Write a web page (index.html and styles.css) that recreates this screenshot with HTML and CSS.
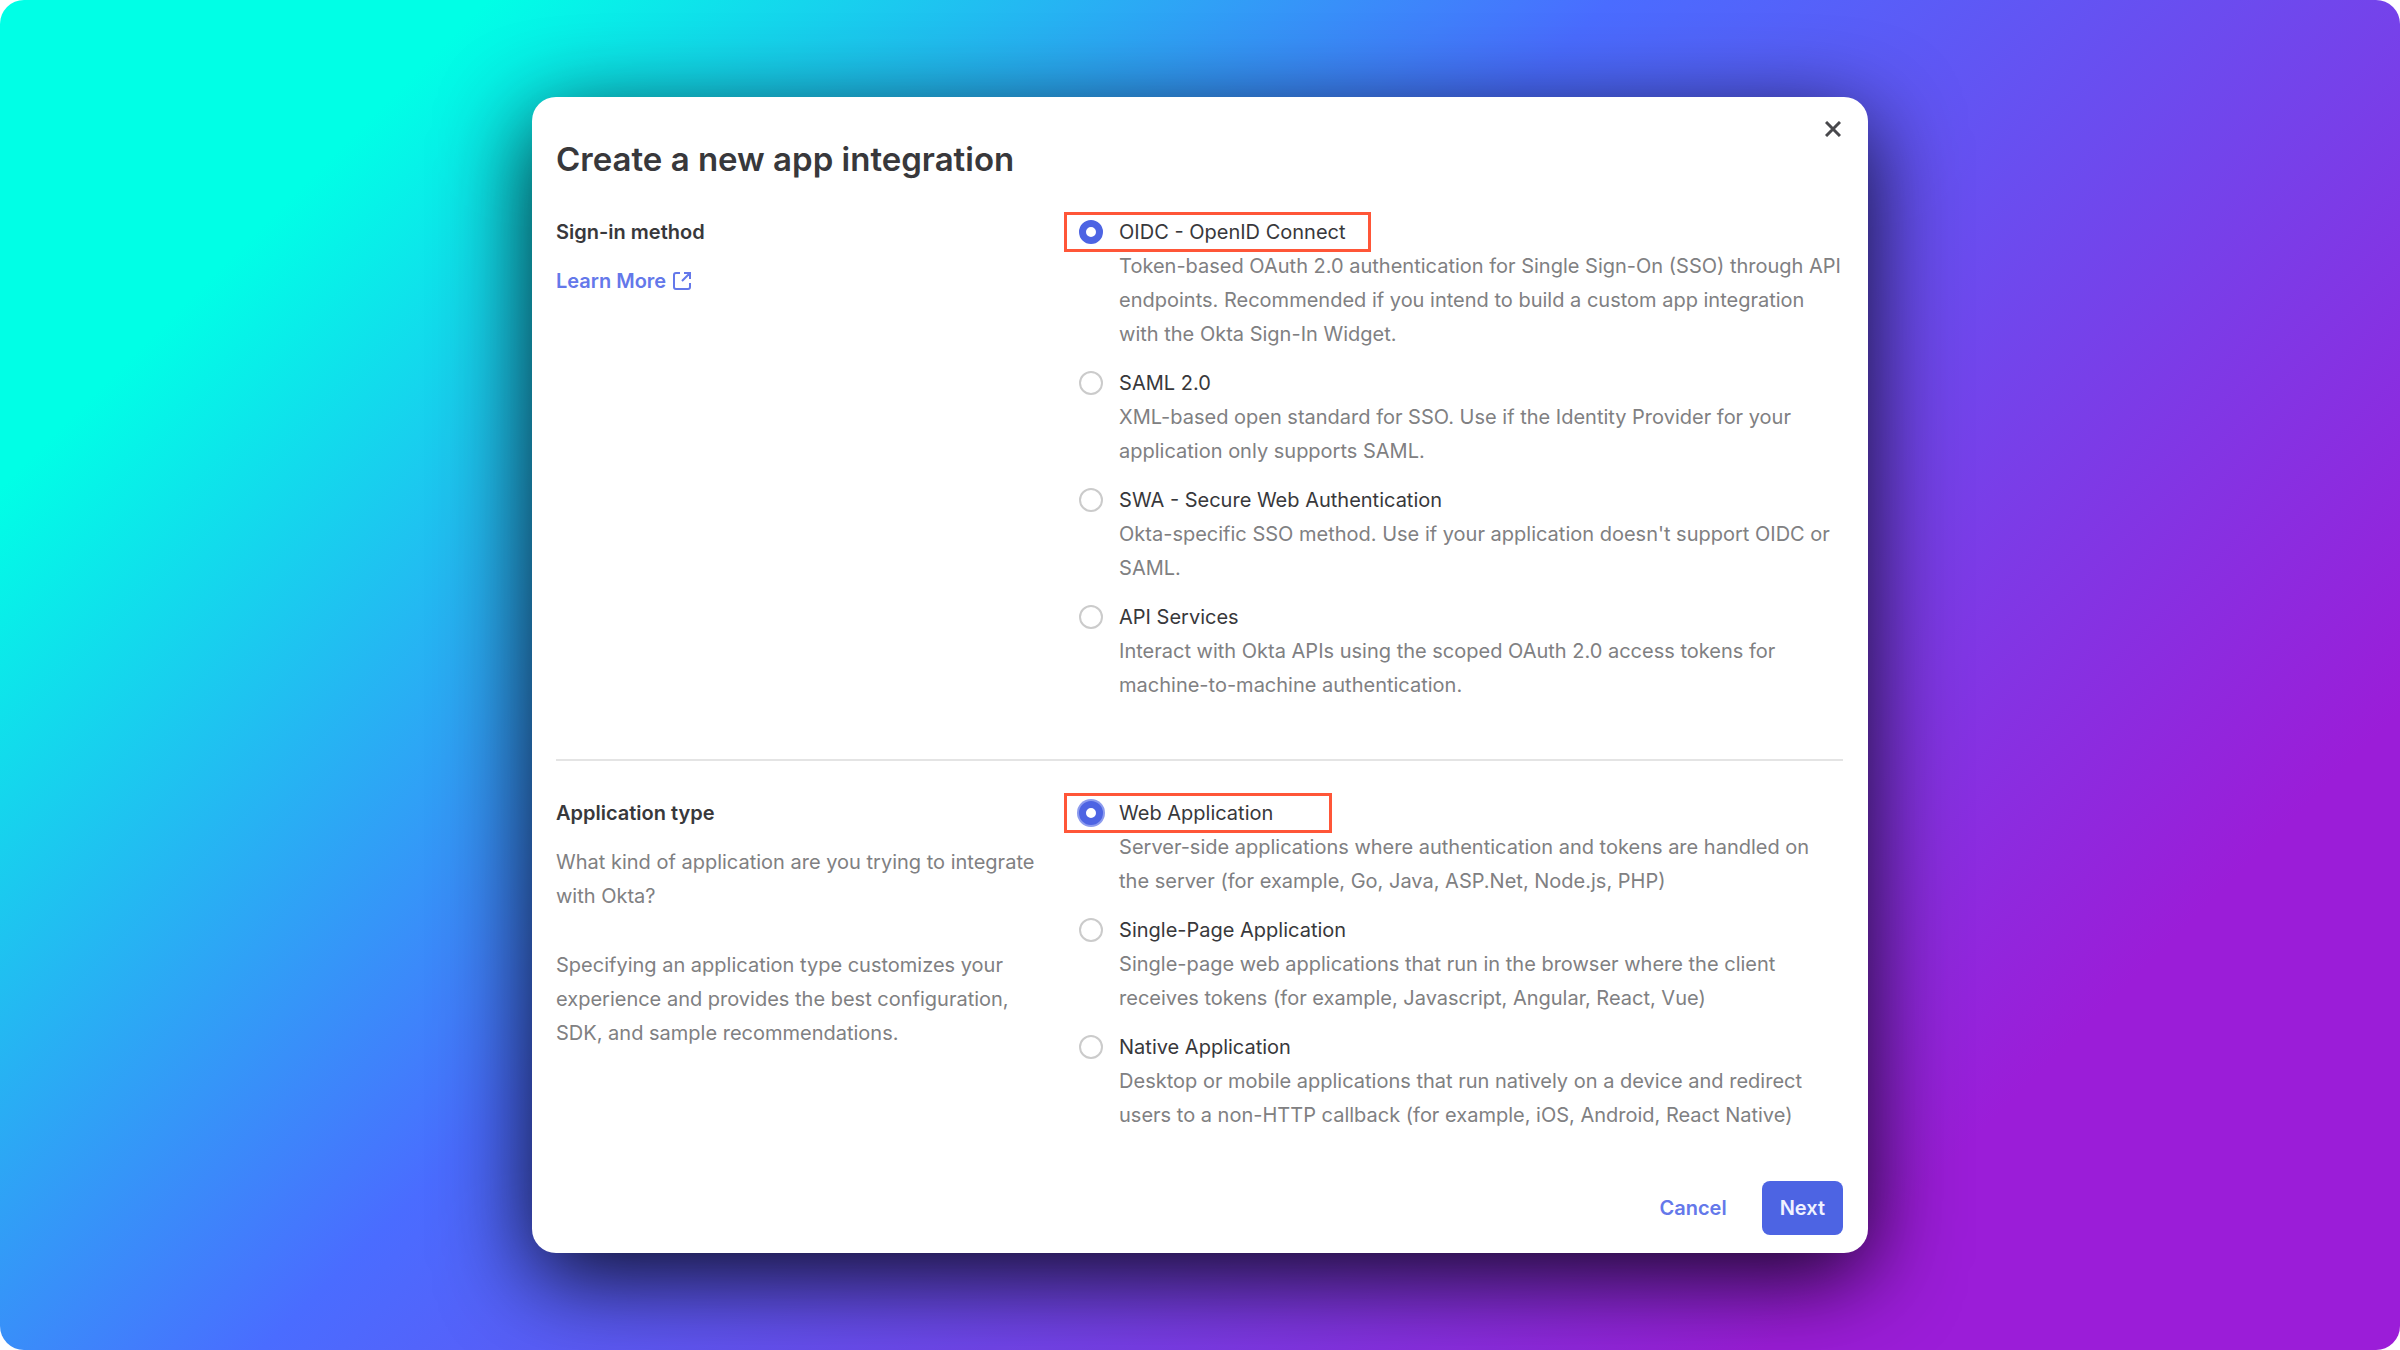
FILE: index.html
```html
<!DOCTYPE html>
<html lang="en">
<head>
    <meta charset="UTF-8">
    <title>Create a new app integration</title>
    <link rel="stylesheet" href="styles.css">
</head>
<body>
    <div class="backdrop">
        <form class="dialog">
            <button type="button" class="close" aria-label="Close">
                <svg width="16" height="16" viewBox="0 0 16 16" fill="none" stroke="currentColor" stroke-width="3">
                    <path d="M1 1l14 14M15 1l-14 14"/>
                </svg>
            </button>
            <h1>Create a new app integration</h1>

            <section class="section">
                <div class="info">
                    <h2>Sign-in method</h2>
                    <a href="#" class="learn-more">Learn More
                        <svg width="18" height="18" viewBox="0 0 18 18" fill="none" stroke="currentColor" stroke-width="2">
                            <path d="M7 1H3a2 2 0 0 0-2 2v12a2 2 0 0 0 2 2h12a2 2 0 0 0 2-2v-4M11 1h6v6M17 1l-8 8"/>
                        </svg>
                    </a>
                </div>
                <div class="options">
                    <div class="option">
                        <label class="highlight"><input type="radio" name="method" checked>OIDC - OpenID Connect</label>
                        <p>Token-based OAuth 2.0 authentication for Single Sign-On (SSO) through API endpoints. Recommended if you intend to build a custom app integration with the Okta Sign-In Widget.</p>
                    </div>
                    <div class="option">
                        <label><input type="radio" name="method">SAML 2.0</label>
                        <p>XML-based open standard for SSO. Use if the Identity Provider for your application only supports SAML.</p>
                    </div>
                    <div class="option">
                        <label><input type="radio" name="method">SWA - Secure Web Authentication</label>
                        <p>Okta-specific SSO method. Use if your application doesn't support OIDC or SAML.</p>
                    </div>
                    <div class="option">
                        <label><input type="radio" name="method">API Services</label>
                        <p>Interact with Okta APIs using the scoped OAuth 2.0 access tokens for machine-to-machine authentication.</p>
                    </div>
                </div>
            </section>

            <section class="section app-type">
                <div class="info">
                    <h2>Application type</h2>
                    <p>What kind of application are you trying to integrate with Okta?</p>
                    <p>Specifying an application type customizes your experience and provides the best configuration, SDK, and sample recommendations.</p>
                </div>
                <div class="options">
                    <div class="option">
                        <label class="highlight wide"><input type="radio" name="type" class="focused" checked>Web Application</label>
                        <p>Server-side applications where authentication and tokens are handled on the server (for example, Go, Java, ASP.Net, Node.js, PHP)</p>
                    </div>
                    <div class="option">
                        <label><input type="radio" name="type">Single-Page Application</label>
                        <p>Single-page web applications that run in the browser where the client receives tokens (for example, Javascript, Angular, React, Vue)</p>
                    </div>
                    <div class="option">
                        <label><input type="radio" name="type">Native Application</label>
                        <p>Desktop or mobile applications that run natively on a device and redirect users to a non-HTTP callback (for example, iOS, Android, React Native)</p>
                    </div>
                </div>
            </section>

            <div class="actions">
                <button type="button" class="cancel">Cancel</button>
                <button type="button" class="next">Next</button>
            </div>
        </form>
    </div>
</body>
</html>
```
FILE: styles.css
```css
* {
    box-sizing: border-box;
}
body {
    margin: 0;
    background-color: white;
    font-family: Inter, "Liberation Sans", sans-serif;
    font-size: 20px;
    line-height: 34px;
    color: #38383b;
}
.backdrop {
    min-height: 100vh;
    display: flex;
    align-items: center;
    justify-content: center;
    border-radius: 24px;
    background: linear-gradient(135deg, #00ffe6 13%, #4a6cff 43%, #9b1dd8 83%);
}
.dialog {
    position: relative;
    width: 100%;
    max-width: 1336px;
    padding: 40px 25px 18px 24px;
    border-radius: 24px;
    background-color: white;
    box-shadow: 0 24px 90px rgba(0, 0, 0, 0.85);
}
h1 {
    margin: 0;
    font-size: 33px;
    font-weight: 600;
    line-height: 44px;
    color: #38383b;
}
h2 {
    margin: 0;
    font-size: 20px;
    font-weight: 600;
    line-height: 34px;
}
p {
    margin: 0;
    color: #808082;
}
button {
    border: none;
    background: none;
    padding: 0;
    font: inherit;
    font-weight: 600;
    cursor: pointer;
}
.close {
    position: absolute;
    top: 24px;
    right: 27px;
    width: 16px;
    height: 16px;
    color: #48484c;
}
.close svg {
    display: block;
}
.section {
    display: grid;
    grid-template-columns: 38% 1fr;
    column-gap: 22px;
    padding: 34px 0 57px;
}
.app-type {
    border-top: 2px solid #e4e4e4;
    padding: 35px 0 49px;
}
.info {
    display: flex;
    flex-direction: column;
    align-items: flex-start;
    gap: 15px;
}
.info p + p {
    margin-top: 20px;
}
.learn-more {
    display: flex;
    align-items: center;
    gap: 7px;
    color: #6478ea;
    font-weight: 600;
    text-decoration: none;
}
.options {
    display: flex;
    flex-direction: column;
    gap: 15px;
}
.option label {
    display: inline-flex;
    align-items: center;
    gap: 16px;
    padding-left: 12px;
    vertical-align: top;
}
.option p {
    padding-left: 52px;
}
.option .highlight {
    padding-right: 22px;
    outline: 3px solid #ff5638;
}
.option .wide {
    padding-right: 56px;
}
input[type=radio] {
    appearance: none;
    flex: none;
    width: 24px;
    height: 24px;
    margin: 0;
    border: 2px solid #cbcbcb;
    border-radius: 50%;
    background-color: white;
}
input[type=radio]:checked {
    border: 7px solid #4d64e3;
}
input[type=radio].focused {
    box-shadow: 0 0 0 2px #8c9bee;
}
.actions {
    display: flex;
    justify-content: flex-end;
    align-items: center;
    gap: 35px;
}
.cancel {
    color: #6478ea;
}
.next {
    padding: 10px 18px;
    border-radius: 8px;
    background-color: #4d64e3;
    color: #f0f2ff;
}
```
